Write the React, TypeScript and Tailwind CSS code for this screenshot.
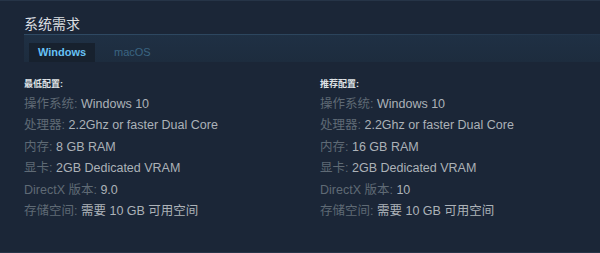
type Spec = {
  label: string;
  value: string;
};

const minimum: Spec[] = [
  { label: "操作系统", value: "Windows 10" },
  { label: "处理器", value: "2.2Ghz or faster Dual Core" },
  { label: "内存", value: "8 GB RAM" },
  { label: "显卡", value: "2GB Dedicated VRAM" },
  { label: "DirectX 版本", value: "9.0" },
  { label: "存储空间", value: "需要 10 GB 可用空间" },
];

const recommended: Spec[] = [
  { label: "操作系统", value: "Windows 10" },
  { label: "处理器", value: "2.2Ghz or faster Dual Core" },
  { label: "内存", value: "16 GB RAM" },
  { label: "显卡", value: "2GB Dedicated VRAM" },
  { label: "DirectX 版本", value: "10" },
  { label: "存储空间", value: "需要 10 GB 可用空间" },
];

function SpecColumn({ title, items }: { title: string; items: Spec[] }) {
  return (
    <div>
      <p className="mb-[4px] text-[9px] font-bold leading-[12px] text-[#dfe3e6]">
        {title}:
      </p>
      <ul>
        {items.map((item) => (
          <li
            key={item.label}
            className="whitespace-nowrap text-[12.5px] leading-[21.4px]"
          >
            <span className="text-[#5f6a75]">{item.label}:</span>{" "}
            <span className="text-[#acb2b8]">{item.value}</span>
          </li>
        ))}
      </ul>
    </div>
  );
}

export default function App() {
  return (
    <div
      className="h-[253px] w-[600px] overflow-hidden border-y border-[#263447] bg-[#1b2637] pl-[24px] pt-[14px]"
      style={{ fontFamily: '"Liberation Sans", Arial, "Noto Sans CJK SC", sans-serif' }}
    >
      <h2 className="text-[14px] leading-[18px] text-[#dcdfe2]">系统需求</h2>

      <div className="mt-[1px] h-px bg-gradient-to-r from-[#2f4a64] via-[#2c455d] to-[#22344a]" />

      <div className="flex h-[27px] items-end gap-[10px] bg-gradient-to-b from-[#1f3044] to-[#1d2c3e] pl-[5px]">
        <div className="flex h-[19px] w-[66px] items-center justify-center bg-[#17212e] text-[11px] font-semibold text-[#67c1f5]">
          Windows
        </div>
        <div className="flex h-[19px] items-center px-[9px] text-[11px] text-[#3b6582]">
          macOS
        </div>
      </div>

      <div className="mt-[16px] grid grid-cols-[296px_1fr]">
        <SpecColumn title="最低配置" items={minimum} />
        <SpecColumn title="推荐配置" items={recommended} />
      </div>
    </div>
  );
}
